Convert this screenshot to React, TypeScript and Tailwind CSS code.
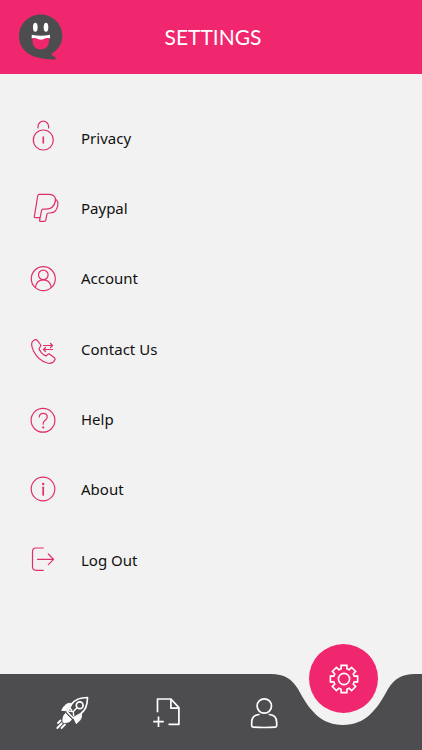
import type { ReactNode } from "react";

type Item = { label: string; icon: ReactNode };

const items: Item[] = [
  {
    label: "Privacy",
    icon: (
      <>
        <path d="M8 8V6.5a5.3 5.3 0 0 1 10.6 0V8" />
        <circle cx="13.3" cy="20" r="10" />
        <path d="M13.3 17v6" strokeWidth="1.6" />
      </>
    ),
  },
  {
    label: "Paypal",
    icon: (
      <>
        <path d="M9.6 27.6H5.2q-1 0-.9-1L7.8 5.500Q8 4.300 9.300 4.300H19c5 0 7.300 3 6.300 7.200-1.100 5-4.300 7.600-9.300 7.600h-2.800q-1.300 0-1.600 1.300l-2 10q-.2.9.7.9h4.200q1 0 1.200-1l1.200-6q.3-1.300 1.600-1.300h1c4.500 0 7.300-2.500 8.200-7.200.6-3-.1-5.500-2.500-6.800" />
      </>
    ),
  },
  {
    label: "Account",
    icon: (
      <>
        <circle cx="13.3" cy="17.7" r="12" />
        <circle cx="13.3" cy="13.9" r="4.8" />
        <path d="M5.500 26.500c.5-4.700 3.500-7.700 7.800-7.700s7.300 3 7.800 7.700" />
      </>
    ),
  },
  {
    label: "Contact Us",
    icon: (
      <>
        <path d="M3.500 9.500C1 11 1.200 15 3.500 20c3 6 8 10.500 14 12 3 .8 6-.5 7.300-3 .6-1.200.1-2-.7-2.600l-4-3c-1-.7-2-.4-2.800.4-1 1.200-2 1.300-3.300.3-1.800-1.300-3.200-3-4.400-5-.8-1.300-.5-2.200.4-3 .8-.8 1-1.600.4-2.600L7.500 9.700c-.8-1.200-2.200-1.400-4-.2z" />
        <path d="M13.500 14.500h9M20.500 12.500l2 2-2 2M22.500 18.500h-9M15.500 16.500l-2 2 2 2" />
      </>
    ),
  },
  {
    label: "Help",
    icon: (
      <>
        <circle cx="13" cy="19.3" r="11.9" />
        <path d="M9.300 16c0-2.300 1.600-3.700 3.900-3.700s4 1.400 4 3.600c0 3.400-4 3.200-4 6.400v.9" />
        <circle cx="13.2" cy="26.4" r=".5" />
      </>
    ),
  },
  {
    label: "About",
    icon: (
      <>
        <circle cx="13" cy="17" r="11.8" />
        <path d="M13.200 15.300v7.700" strokeWidth="1.700" />
        <circle cx="13.200" cy="12" r=".6" />
      </>
    ),
  },
  {
    label: "Log Out",
    icon: (
      <>
        <path d="M13.300 6H6Q2.500 6 2.500 9.500v15.300q0 3.500 3.500 3.500h7.300" />
        <path d="M7.500 17.300h16M18.300 12l5.300 5.300-5.300 5.300" />
      </>
    ),
  },
];

// eight square teeth around the origin
const gearPoints = Array.from({ length: 8 }, (_, k) => {
  const a = (k * Math.PI) / 4;
  return [[-2.9, -10.2], [-2.9, -13.6], [2.9, -13.6], [2.9, -10.2]]
    .map(([x, y]) => `${(x * Math.cos(a) - y * Math.sin(a)).toFixed(2)},${(x * Math.sin(a) + y * Math.cos(a)).toFixed(2)}`)
    .join(" ");
}).join(" ");

export default function App() {
  return (
    <div className="flex min-h-screen flex-col bg-[#f2f2f2] font-['Lato',sans-serif]">
      <header className="grid h-[74px] grid-cols-[44px_1fr_40px] items-center bg-[#f0276e] px-[19px]">
        <Logo />
        <h1 className="text-center text-[21px] leading-6 text-white">SETTINGS</h1>
      </header>

      <main className="flex flex-1 flex-col pt-8 pb-[82px]">
        <ul className="flex flex-1 flex-col justify-between">
          {items.map((item) => (
            <li key={item.label}>
              <button className="flex h-16 w-full items-center gap-[21px] px-[30px] text-left font-['Noto_Sans',sans-serif] text-[15px] text-[#111111]">
                <svg
                  className="h-9 w-[30px] shrink-0"
                  viewBox="0 0 30 36"
                  fill="none"
                  stroke="#e02e6c"
                  strokeWidth="1.2"
                  strokeLinecap="round"
                  strokeLinejoin="round"
                  aria-hidden="true"
                >
                  {item.icon}
                </svg>
                {item.label}
              </button>
            </li>
          ))}
        </ul>
      </main>

      <footer className="relative h-[76px]">
        <div className="absolute inset-0 flex">
          <div className="flex-1 bg-[#4d4d4f]" />
          <svg className="h-full w-36" viewBox="0 0 144 76" aria-hidden="true">
            <path d="M0 0C13 0 21 5 27 15C38 36 50 51 72 51S106 36 117 15C123 5 131 0 144 0V76H0Z" fill="#4d4d4f" />
          </svg>
          <div className="w-[7px] bg-[#4d4d4f]" />
        </div>

        <nav className="relative flex h-full gap-[29px] pr-11 pl-14">
          <div className="flex flex-1 items-center justify-between">
            <NavButton label="Launch">
              <path d="M31.500 1.500C24 1.500 18.500 4 15.500 8.300L11.300 16l5.900 6 7.600-4.300c4.700-3.400 6.700-8.700 6.700-16.200z" />
              <circle cx="23.700" cy="9.200" r="3.400" />
              <path d="M21.300 11.600l-4 4M17.300 15.600l-3.700-.3M17.300 15.600l.3 4M14 12.300l1.700 1.600" strokeWidth="1.400" />
              <path d="M14.800 7.300C11 7 8.500 9 5.700 14.300l5 .5zM25.500 18.500c.2 4-1.500 6.500-5.300 9L18 22.300z" fill="white" strokeWidth="1" />
              <path d="M9.500 17.500l6 6c-1.300 2.300-4.500 3.500-8.500 2.800-.5-3.800.3-7 2.500-8.800z" fill="white" strokeWidth="1" />
              <path d="M4.500 24.500L2 27M5.700 27.500L1.300 32M9 28.500L5.500 32" strokeWidth="1.800" />
            </NavButton>
            <NavButton label="New document">
              <path d="M5.500 16.300V3h13.400l8 8.700v16.600H16.500M18.900 3v9.200h8" strokeLinecap="butt" />
              <path d="M6.500 20.500v10.500M1.200 25.700h10.600" strokeLinecap="butt" />
            </NavButton>
            <NavButton label="Profile">
              <circle cx="16.300" cy="10" r="7.200" />
              <path d="M11 18.500c-5 .4-7.300 3-7.300 8v3.200q0 1.300 1.500 1.400c7 .5 15 .5 22 0q1.500-.1 1.500-1.400v-3.200c0-5-2.300-7.600-7.300-8" />
            </NavButton>
          </div>
          <button
            aria-label="Settings"
            className="-mt-[30px] flex size-[69px] items-center justify-center rounded-full bg-[#f0276e]"
          >
            <svg className="size-8" viewBox="-16 -16 32 32" fill="none" stroke="white" strokeWidth="1.600" aria-hidden="true">
              <polygon points={gearPoints} />
              <circle r="5.600" />
            </svg>
          </button>
        </nav>
      </footer>
    </div>
  );
}

function NavButton({ label, children }: { label: string; children: ReactNode }) {
  return (
    <button aria-label={label} className="size-8">
      <svg
        className="size-8 overflow-visible"
        viewBox="0 0 32 32"
        fill="none"
        stroke="white"
        strokeWidth="1.700"
        strokeLinecap="round"
        strokeLinejoin="round"
        aria-hidden="true"
      >
        {children}
      </svg>
    </button>
  );
}

function Logo() {
  return (
    <svg className="h-[46px] w-11" viewBox="0 0 44 46" aria-hidden="true">
      <path
        d="M21.700.6C9.700.6 0 10.200 0 22c0 13 10 20.500 22 22.200 5.500 1 10.500 1.500 13.800 1 1.500-.3 1.500-1.500.3-2-1.700-.8-3-1.900-3.600-3.500C39 36 43.400 29.500 43.400 22 43.400 10.200 33.700.6 21.700.6z"
        fill="#4d4d4f"
      />
      <ellipse cx="16.300" cy="13.300" rx="2.300" ry="4.500" fill="white" />
      <ellipse cx="27" cy="13.300" rx="2.300" ry="4.500" fill="white" />
      <path d="M13.500 23.500h16.500v3.500c0 5-3.500 8.500-8.200 8.500s-8.300-3.500-8.300-8.500z" fill="#f0276e" />
      <path d="M12.700 20.700c6 1.300 12.500 1.300 18.300 0v3.800c-2.500-.8-4.500-.5-6.200.5-1.800 1-4 1-5.800 0-1.800-.9-3.800-1.300-6.300-.5z" fill="white" />
    </svg>
  );
}
